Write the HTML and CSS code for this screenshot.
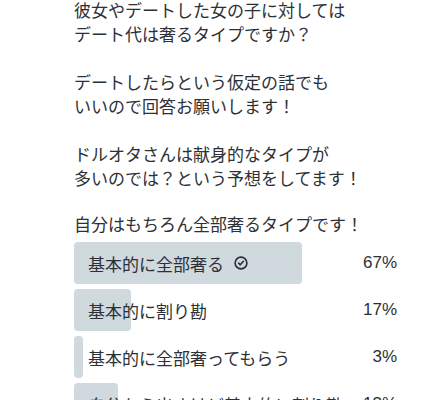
FILE: index.html
```html
<!DOCTYPE html>
<html lang="ja">
<head>
  <meta charset="UTF-8">
  <meta name="viewport" content="width=device-width, initial-scale=1.0">
  <title>Poll</title>
  <link rel="stylesheet" href="styles.css">
</head>
<body>
  <div class="tweet">
    <p>彼女やデートした女の子に対しては<br>デート代は奢るタイプですか？</p>
    <p>デートしたらという仮定の話でも<br>いいので回答お願いします！</p>
    <p>ドルオタさんは献身的なタイプが<br>多いのでは？という予想をしてます！</p>
    <p class="last">自分はもちろん全部奢るタイプです！</p>

    <div class="poll">
      <div class="option">
        <div class="bar" style="width: 228px;"></div>
        <span class="label">基本的に全部奢る
          <svg class="check" viewBox="0 0 14 14" width="14" height="14">
            <circle cx="7" cy="7" r="5.9" fill="none" stroke="#2a2e33" stroke-width="1.6"/>
            <path d="M4.6 7.2 L6.3 8.8 L9.4 5.3" fill="none" stroke="#2a2e33" stroke-width="1.6" stroke-linecap="round" stroke-linejoin="round"/>
          </svg>
        </span>
        <span class="pct">67%</span>
      </div>
      <div class="option">
        <div class="bar" style="width: 57px;"></div>
        <span class="label">基本的に割り勘</span>
        <span class="pct">17%</span>
      </div>
      <div class="option">
        <div class="bar" style="width: 9px;"></div>
        <span class="label">基本的に全部奢ってもらう</span>
        <span class="pct">3%</span>
      </div>
      <div class="option">
        <div class="bar" style="width: 44px;"></div>
        <span class="label">自分から出すけど基本的に割り勘</span>
        <span class="pct">13%</span>
      </div>
    </div>
  </div>
</body>
</html>
```

FILE: styles.css
```css
body {
  margin: 0;
  background: #fff;
  color: #2d3136;
  font-family: "Noto Sans CJK JP", "Liberation Sans", sans-serif;
  overflow: hidden;
}

.tweet {
  padding: 0 31px 0 74px;
  margin-top: -2px;
}

p {
  margin: 0 0 24px;
  font-size: 17px;
  line-height: 24px;
  white-space: nowrap;
}

p.last {
  margin-top: -2px;
  margin-bottom: 6px;
}

.poll {
  display: flex;
  flex-direction: column;
  gap: 5px;
}

.option {
  position: relative;
  display: flex;
  align-items: center;
  justify-content: space-between;
  height: 42px;
  font-size: 17px;
}

.bar {
  position: absolute;
  left: 0;
  top: 0;
  bottom: 0;
  background: #cfd9de;
  border-radius: 4px;
}

.label {
  position: relative;
  padding-left: 14px;
  display: flex;
  align-items: center;
  white-space: nowrap;
}

.check {
  margin-left: 10px;
}

.pct {
  position: relative;
  font-family: "Liberation Sans", sans-serif;
  font-size: 17px;
}
```
